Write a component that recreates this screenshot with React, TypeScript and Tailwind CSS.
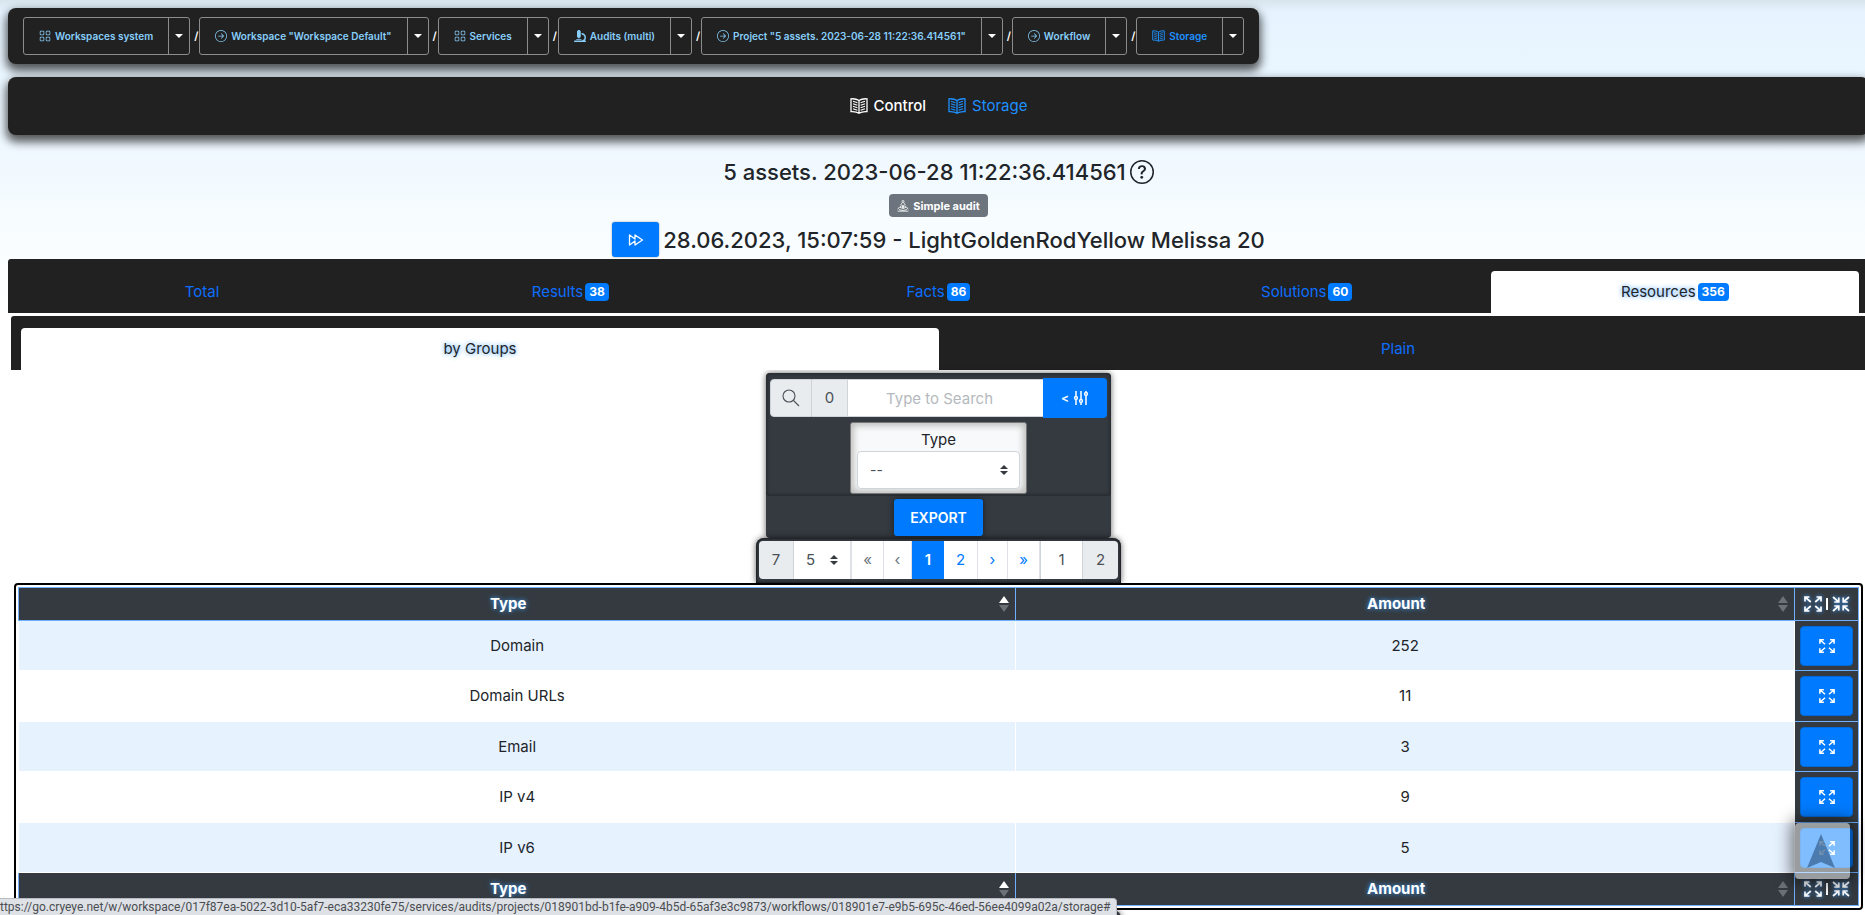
import type { ReactNode } from "react";
import { BsArrowRightCircle, BsGrid, BsQuestionCircle } from "react-icons/bs";
import { FaMicroscope } from "react-icons/fa";

const crumbs = [
  { label: "Workspaces system", icon: "grid" },
  { label: 'Workspace "Workspace Default"', icon: "arrow" },
  { label: "Services", icon: "grid" },
  { label: "Audits (multi)", icon: "microscope" },
  { label: 'Project "5 assets. 2023-06-28 11:22:36.414561"', icon: "arrow" },
  { label: "Workflow", icon: "arrow" },
  { label: "Storage", icon: "book", active: true },
];

const tabs = [
  { label: "Total" },
  { label: "Results", count: 38 },
  { label: "Facts", count: 86 },
  { label: "Solutions", count: 60 },
  { label: "Resources", count: 356, active: true },
];

const rows = [
  { type: "Domain", amount: 252 },
  { type: "Domain URLs", amount: 11 },
  { type: "Email", amount: 3 },
  { type: "IP v4", amount: 9 },
  { type: "IP v6", amount: 5 },
];

const glow = "[text-shadow:0_0_5px_#3b9cff]";

function BookIcon({ className }: { className: string }) {
  return (
    <svg viewBox="0 0 18 16" className={className} fill="none" stroke="currentColor" strokeWidth="1.3" aria-hidden="true">
      <path d="M1 .8 Q6 .4 9 2.6 Q12 .4 17 .8 V13.6 Q12 13.2 9 15.3 Q6 13.2 1 13.6 Z M9 2.6 V15.3" />
      <path d="M3 3.2 L7.4 4.8 M3 5.7 L7.4 7.3 M3 8.2 L7.4 9.8 M3 10.7 L7.4 12.3 M15 3.2 L10.6 4.8 M15 5.7 L10.6 7.3 M15 8.2 L10.6 9.8 M15 10.7 L10.6 12.3" strokeWidth="1.1" />
    </svg>
  );
}

function CrumbIcon({ name }: { name: string }) {
  if (name === "grid") return <BsGrid className="size-3" />;
  if (name === "arrow") return <BsArrowRightCircle className="size-3" />;
  if (name === "microscope") return <FaMicroscope className="size-3" />;
  return <BookIcon className="h-3 w-[13px]" />;
}

function AuditIcon() {
  return (
    <svg viewBox="0 0 12 12" className="size-3" fill="none" stroke="currentColor" strokeWidth="0.8" aria-hidden="true">
      <circle cx="6" cy="1.5" r="1" />
      <path d="M5.3 2.6 L3.4 5.4 M6.7 2.6 L8.6 5.4 M2.4 7 L.8 9.4 M9.6 7 L11.2 9.4 M.6 11.2 H11.4 M2 9.6 Q6 11.4 10 9.6 M2.8 7.2 Q6 3.8 9.2 7.2 Q6 10 2.8 7.2 Z" />
      <circle cx="6" cy="7" r=".8" fill="currentColor" />
    </svg>
  );
}

function ForwardIcon() {
  return (
    <svg viewBox="0 0 16 16" className="size-4" fill="none" stroke="currentColor" strokeWidth="1.3" strokeLinejoin="round" aria-hidden="true">
      <path d="M1.5 3 L7 7 V3 L14.5 8 L7 13 V9 L1.5 13 Z" />
    </svg>
  );
}

function ExpandIcon({ className }: { className: string }) {
  return (
    <svg viewBox="0 0 18 16" className={className} fill="none" stroke="currentColor" strokeWidth="1.7" aria-hidden="true">
      <path d="M1 5.5 V1 H5.5 M1 1 L6.8 6 M12.5 1 H17 V5.5 M17 1 L11.2 6 M1 10.5 V15 H5.5 M1 15 L6.8 10 M17 10.5 V15 H12.5 M17 15 L11.2 10" />
    </svg>
  );
}

function CollapseIcon({ className }: { className: string }) {
  return (
    <svg viewBox="0 0 18 16" className={className} fill="none" stroke="currentColor" strokeWidth="1.7" aria-hidden="true">
      <path d="M6.8 1.5 V6 H2.3 M6.8 6 L1 1 M11.2 1.5 V6 H15.7 M11.2 6 L17 1 M6.8 14.5 V10 H2.3 M6.8 10 L1 15 M11.2 14.5 V10 H15.7 M11.2 10 L17 15" />
    </svg>
  );
}

function SlidersIcon() {
  return (
    <svg viewBox="0 0 16 16" className="size-4" fill="none" stroke="currentColor" strokeWidth="1.5" aria-hidden="true">
      <path d="M3 1 V6.5 M3 9.5 V15 M8 1 V9.5 M8 12.5 V15 M13 1 V2.5 M13 5.5 V15" />
      <circle cx="3" cy="8" r="1.4" />
      <circle cx="8" cy="11" r="1.4" />
      <circle cx="13" cy="4" r="1.4" />
    </svg>
  );
}

function SelectArrows({ className }: { className: string }) {
  return (
    <svg viewBox="0 0 8 10" className={`pointer-events-none absolute h-[10px] w-2 fill-[#343a40] ${className}`} aria-hidden="true">
      <path d="M4 0 L8 4 H0 Z M0 6 H8 L4 10 Z" />
    </svg>
  );
}

function SortIcon({ sorted }: { sorted?: boolean }) {
  return (
    <svg viewBox="0 0 10 16" className="absolute right-[6px] top-2 h-4 w-[10px]" aria-hidden="true">
      <path d="M5 0 L10 7 H0 Z" fill={sorted ? "#fff" : "#6c7175"} />
      <path d="M0 9 H10 L5 16 Z" fill="#6c7175" />
    </svg>
  );
}

function Badge({ children }: { children: ReactNode }) {
  return <span className="rounded bg-[#007bff] px-1 py-[3px] text-[12px] font-bold leading-3 text-white">{children}</span>;
}

function HeadRow() {
  return (
    <tr className="h-[33px] bg-[#343a40] text-white">
      <th className={`relative border border-[#6eb0ff] pr-[18px] ${glow}`}>
        Type
        <SortIcon sorted />
      </th>
      <th className={`relative border border-[#6eb0ff] pr-[18px] ${glow}`}>
        Amount
        <SortIcon />
      </th>
      <th className="border border-[#6eb0ff] p-0">
        <div className="flex items-center justify-center gap-1">
          <button type="button" aria-label="Expand all">
            <ExpandIcon className="block h-4 w-[18px] drop-shadow-[0_0_2px_#3b9cff]" />
          </button>
          <span className="h-3 w-[2px] bg-white" />
          <button type="button" aria-label="Collapse all">
            <CollapseIcon className="block h-4 w-[18px] drop-shadow-[0_0_2px_#3b9cff]" />
          </button>
        </div>
      </th>
    </tr>
  );
}

function Breadcrumbs() {
  return (
    <nav aria-label="Breadcrumb" className="mt-2 flex w-fit items-center rounded-lg bg-[#212121] px-[15px] py-[9px] shadow-[0_5px_10px_2px_rgba(0,0,0,0.65)]">
      {crumbs.map((crumb, i) => (
        <div key={crumb.label} className="flex items-center">
          {i > 0 && <span className="w-[9px] pl-1 text-[11px] font-semibold text-white">/</span>}
          <div className="flex h-[38px] rounded-[3px] border border-[#8c8c8c]">
            <a
              href="#"
              className={`flex items-center gap-1 whitespace-nowrap px-[15px] text-[10px] font-semibold ${crumb.active ? "text-[#1e90ff]" : "text-[#87cefa]"}`}
            >
              <CrumbIcon name={crumb.icon} />
              {crumb.label}
            </a>
            <button type="button" aria-label="Toggle dropdown" className="flex w-[21px] items-center justify-center border-l border-[#8c8c8c]">
              <span className="border-x-4 border-t-4 border-x-transparent border-t-white" />
            </button>
          </div>
        </div>
      ))}
    </nav>
  );
}

function SearchPanel() {
  return (
    <div className="mx-auto mt-[3px] w-[345px] rounded bg-[#343a40] shadow-[0_0_6px_rgba(0,0,0,0.6)]">
      <div className="flex flex-col items-center rounded px-1 pb-[2px] pt-[5px] shadow-[inset_0_0_4px_#1b1e21]">
        <div className="flex w-full items-center text-[#495057]">
          <span className="flex h-[38px] w-[42px] items-center justify-center rounded-l border border-[#ced4da] bg-[#e9ecef]">
            <svg viewBox="0 0 18 18" className="size-[18px]" fill="none" stroke="currentColor" strokeWidth="1.1" aria-hidden="true">
              <circle cx="7" cy="7" r="6" />
              <path d="M11.5 11.5 L17 17" />
            </svg>
          </span>
          <span className="flex h-[38px] w-[35px] items-center justify-center border-y border-[#ced4da] bg-[#e9ecef]">0</span>
          <input
            type="text"
            aria-label="Search"
            placeholder="Type to Search"
            className="h-[38px] min-w-0 flex-1 border border-r-0 border-[#ced4da] bg-white pl-3 pr-6 text-center placeholder:text-[#b5b9bd]"
          />
          <button type="button" aria-label="Filters" className="flex h-10 w-16 items-center justify-center gap-1 rounded-r bg-[#007bff] text-[12px] font-semibold text-white">
            &lt; <SlidersIcon />
          </button>
        </div>
        <div className="mt-1 flex w-[177px] flex-col rounded-[3px] border border-[#777] bg-[#f8f9fa] px-[6px] pb-1 pt-[5px] shadow-[inset_0_0_6px_3px_#bfbfbf]">
          <label htmlFor="type" className="text-center leading-[23px] text-[#212529]">
            Type
          </label>
          <div className="relative">
            <select id="type" className="h-[38px] w-full appearance-none rounded border border-[#ced4da] bg-white px-3 text-[14px] text-[#495057]">
              <option>--</option>
            </select>
            <SelectArrows className="right-3 top-[14px]" />
          </div>
        </div>
      </div>
      <div className="flex justify-center pb-[2px] pt-[3px]">
        <button type="button" className="h-[37px] rounded-[3px] bg-[#007bff] px-4 text-[14px] font-semibold text-white shadow-[0_0_6px_rgba(0,0,0,0.5)]">
          EXPORT
        </button>
      </div>
    </div>
  );
}

function Pagination() {
  const cell = "flex items-center justify-center border-r border-[#dee2e6] bg-white";
  return (
    <div className="mx-auto w-[365px] rounded-t-lg bg-[#343a40] px-[3px] pb-1 pt-[3px] shadow-[0_0_6px_rgba(0,0,0,0.6),inset_0_0_3px_#000]">
      <div className="flex h-[38px] overflow-hidden rounded text-[#495057]">
        <span className="flex w-[35px] items-center justify-center border-r border-[#ced4da] bg-[#e9ecef]">7</span>
        <div className="relative w-[58px] border-r-2 border-[#dee2e6]">
          <select aria-label="Rows per page" className="h-full w-full appearance-none bg-white pl-3">
            <option>5</option>
          </select>
          <SelectArrows className="right-3 top-[14px]" />
        </div>
        <button type="button" className={`${cell} w-8 text-[#6c757d]`}>«</button>
        <button type="button" className={`${cell} w-7 text-[#6c757d]`}>‹</button>
        <button type="button" className="flex w-8 items-center justify-center bg-[#007bff] font-semibold text-white">1</button>
        <button type="button" className={`${cell} w-[34px] text-[#007bff]`}>2</button>
        <button type="button" className={`${cell} w-[30px] text-[#007bff]`}>›</button>
        <button type="button" className={`${cell} w-8 text-[#007bff]`}>»</button>
        <input aria-label="Page" defaultValue="1" className="min-w-0 flex-1 border-x border-[#ced4da] bg-white text-center" />
        <span className="flex w-[35px] items-center justify-center bg-[#e9ecef]">2</span>
      </div>
    </div>
  );
}

export default function App() {
  return (
    <div className="h-screen overflow-hidden bg-[linear-gradient(to_bottom,#d9e4ec_0px,#e6f4ff_12px,#f0f9ff_160px,#fbfeff_260px,#fff_320px)] font-[Inter,'Liberation_Sans',sans-serif] text-[15px] leading-6 text-[#212529]">
      <main className="-mr-1 ml-2 flow-root">
        <Breadcrumbs />

        <nav aria-label="Section" className="mt-[13px] flex h-[58px] items-center justify-center gap-[22px] rounded-lg bg-[#212121] shadow-[0_5px_10px_2px_rgba(0,0,0,0.65)]">
          <a href="#" className="flex items-center gap-[6px] font-medium text-white">
            <BookIcon className="h-4 w-[18px]" />
            Control
          </a>
          <a href="#" className="flex items-center gap-[6px] text-[#1e90ff]">
            <BookIcon className="h-4 w-[18px]" />
            Storage
          </a>
        </nav>

        <header className="flex flex-col items-center pb-[2px] pt-[23px]">
          <h1 className="flex h-7 items-center gap-1 text-[22px] font-medium">
            5 assets. 2023-06-28 11:22:36.414561
            <BsQuestionCircle className="size-6" />
          </h1>
          <span className="mt-2 flex h-[23px] items-center gap-1 rounded bg-[#6c757d] px-2 text-[11px] font-bold text-white">
            <AuditIcon />
            Simple audit
          </span>
          <div className="mt-[5px] flex items-center gap-1">
            <button type="button" aria-label="Next run" className="flex h-[35px] w-[47px] items-center justify-center rounded-[3px] bg-[#007bff] text-white shadow-[0_0_2px_rgba(0,0,0,0.4)]">
              <ForwardIcon />
            </button>
            <h2 className="text-[22px] font-medium">28.06.2023, 15:07:59 - LightGoldenRodYellow Melissa 20</h2>
          </div>
        </header>

        <div role="tablist" className="flex rounded-t-[3px] bg-[#212121] px-[10px] pt-3">
          {tabs.map((tab) => (
            <a
              key={tab.label}
              href="#"
              role="tab"
              aria-selected={!!tab.active}
              className={`flex h-[42px] flex-1 items-center justify-center gap-[2px] rounded-t ${tab.active ? "bg-white text-[#212529]" : "text-[#0d6efd]"}`}
            >
              <span className={tab.active ? glow : ""}>{tab.label}</span>
              {tab.count && <Badge>{tab.count}</Badge>}
            </a>
          ))}
        </div>
        <div className="bg-white pt-[3px]">
          <div role="tablist" className="ml-[3px] mr-[2px] flex rounded-t-[3px] bg-[#212121] px-[10px] pt-3">
            <a href="#" role="tab" aria-selected="true" className={`flex h-[42px] flex-1 items-center justify-center rounded-t bg-white text-[#212529] ${glow}`}>
              by Groups
            </a>
            <a href="#" role="tab" aria-selected="false" className="flex h-[42px] flex-1 items-center justify-center text-[#0d6efd]">
              Plain
            </a>
          </div>

          <SearchPanel />
          <Pagination />

          <div className="relative mx-[6px] rounded border-2 border-black bg-white p-[2px]">
            <table className="w-full table-fixed border-collapse text-center">
              <colgroup>
                <col className="w-[54.2%]" />
                <col />
                <col className="w-16" />
              </colgroup>
              <thead>
                <HeadRow />
              </thead>
              <tbody>
                {rows.map((row) => (
                  <tr key={row.type} className="h-[50px] odd:bg-[#e7f2ff] even:h-[51px]">
                    <td className="border border-white p-0">{row.type}</td>
                    <td className="border border-white p-0">{row.amount}</td>
                    <td className="border border-[#6eb0ff] bg-[#343a40] p-0">
                      <button type="button" aria-label={`Expand ${row.type}`} className="inline-flex h-10 w-[53px] items-center justify-center rounded border border-[#0069d9] bg-[#007bff] align-middle text-white">
                        <ExpandIcon className="size-4" />
                      </button>
                    </td>
                  </tr>
                ))}
              </tbody>
              <tfoot>
                <HeadRow />
              </tfoot>
            </table>
          </div>
          <div className="mx-auto h-4 w-[365px] rounded-t-lg bg-[#343a40] shadow-[0_0_6px_rgba(0,0,0,0.6)]" />
        </div>
      </main>

      <button type="button" aria-label="Scroll to top" className="fixed bottom-9 right-[15px] flex h-14 w-[55px] items-center justify-center rounded bg-white/50 shadow-[0_0_16px_4px_rgba(0,0,0,0.5)]">
        <svg viewBox="0 0 28 34" className="mr-1 h-[34px] w-7 fill-[#345f8c]/70" aria-hidden="true">
          <path d="M14 0 L28 34 L14 28 L0 34 Z" />
        </svg>
      </button>

      <div className="fixed bottom-0 left-0 whitespace-nowrap rounded-tr border-r border-t border-[#b8bcc2] bg-[#dee1e6] pr-[5px] font-[Roboto,'Noto_Sans',sans-serif] text-[12px] leading-4 text-[#4a4d51]">
        ttps://go.cryeye.net/w/workspace/017f87ea-5022-3d10-5af7-eca33230fe75/services/audits/projects/018901bd-b1fe-a909-4b5d-65af3e3c9873/workflows/018901e7-e9b5-695c-46ed-56ee4099a02a/storage#
      </div>
    </div>
  );
}
